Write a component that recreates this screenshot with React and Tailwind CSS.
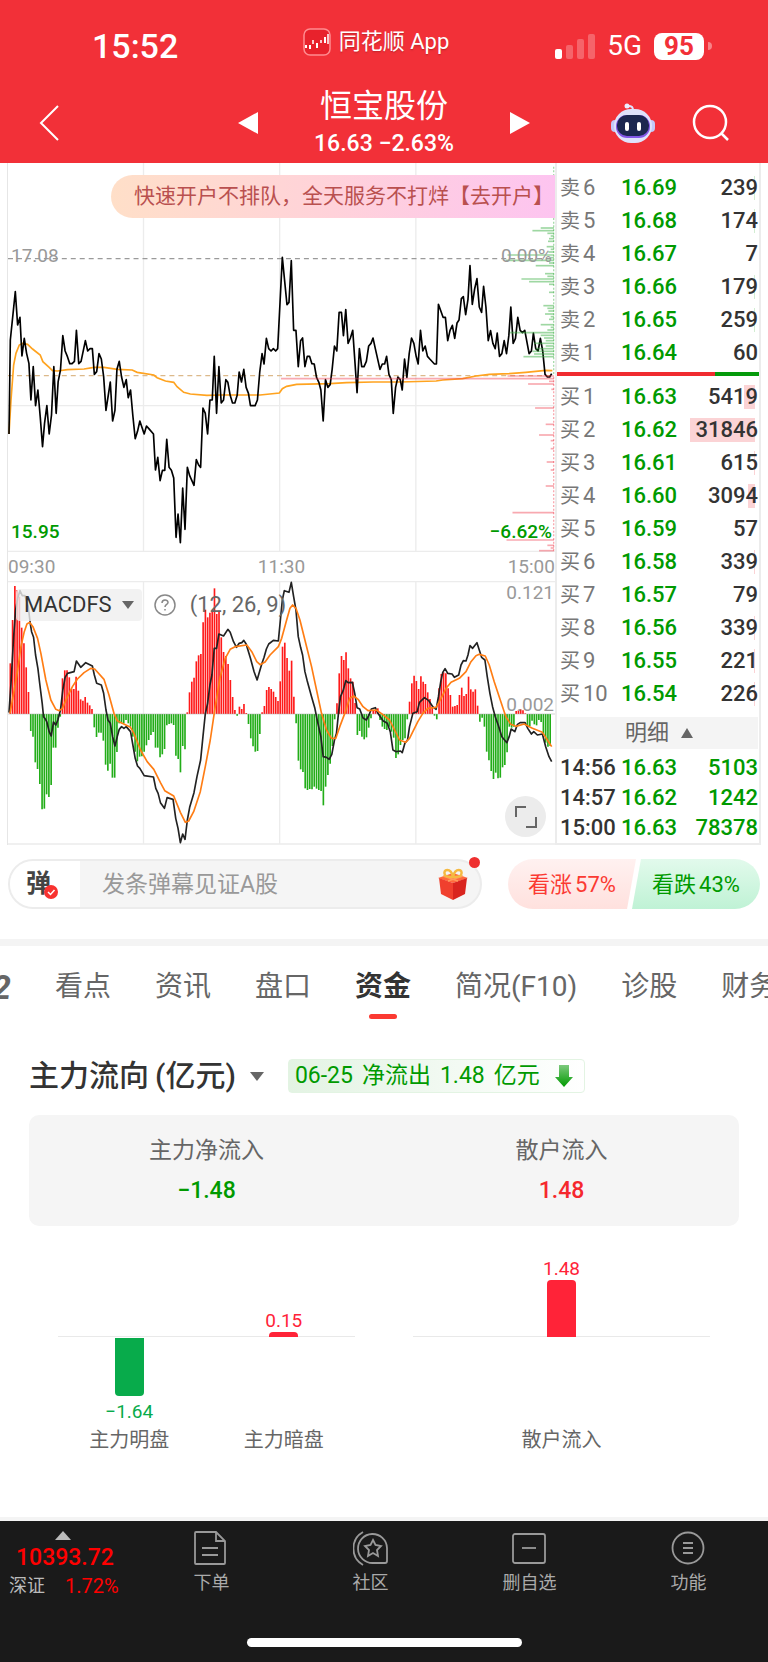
const sells = [
  ["6", "16.69", "239", 1],
  ["5", "16.68", "174", 1],
  ["4", "16.67", "7", 0],
  ["3", "16.66", "179", 1],
  ["2", "16.65", "259", 1],
  ["1", "16.64", "60", 0],
];

const buys = [
  ["1", "16.63", "5419", 11],
  ["2", "16.62", "31846", 65],
  ["3", "16.61", "615", 1],
  ["4", "16.60", "3094", 7],
  ["5", "16.59", "57", 0],
  ["6", "16.58", "339", 1],
  ["7", "16.57", "79", 0],
  ["8", "16.56", "339", 1],
  ["9", "16.55", "221", 1],
  ["10", "16.54", "226", 1],
];

const trades = [
  ["14:56", "16.63", "5103"],
  ["14:57", "16.62", "1242"],
  ["15:00", "16.63", "78378"],
];

const tabs = ["看点", "资讯", "盘口", "资金", "简况(F10)", "诊股", "财务"];

// chart coordinates are three units per pixel
const pricePoints =
  "24,822 28,540 43,395 50,495 57,472 63,588 70,535 77,580 84,610 90,720 97,620 104,737 111,690 118,770 125,860 131,790 138,737 145,822 152,765 159,620 166,760 172,665 179,630 186,527 193,573 200,590 207,611 214,611 221,604 227,511 234,611 241,604 254,542 261,573 268,566 275,566 281,643 288,635 295,581 302,597 309,650 316,751 329,666 336,783 343,751 349,628 356,604 363,651 370,682 377,659 383,713 390,690 397,768 404,836 411,814 418,783 431,822 438,798 445,806 459,822 465,930 472,892 479,962 486,931 493,931 499,838 506,922 513,931 520,954 527,1132 533,1062 540,1148 547,984 554,1108 561,922 568,947 581,976 588,899 595,915 601,922 608,744 615,760 622,822 629,720 636,720 642,589 649,760 656,620 663,729 670,720 677,659 683,667 690,706 697,729 704,729 711,706 717,636 724,666 731,628 738,682 745,700 751,737 765,737 772,720 779,636 786,581 792,612 799,535 806,566 813,573 820,566 827,573 833,566 847,292 861,434 867,427 874,302 881,511 888,511 895,620 902,542 908,534 915,620 922,589 929,589 936,611 943,612 950,652 957,667 963,690 970,783 977,659 984,682 991,674 997,628 1004,558 1011,573 1018,457 1025,457 1031,527 1038,449 1045,550 1052,534 1059,511 1072,698 1079,566 1086,620 1093,620 1100,604 1107,558 1114,550 1120,534 1127,566 1141,628 1148,612 1155,612 1161,589 1168,643 1175,659 1181,760 1188,682 1195,651 1202,659 1208,690 1215,597 1222,652 1229,581 1236,534 1243,550 1250,589 1256,612 1263,511 1270,573 1277,558 1284,589 1291,597 1305,612 1311,612 1317,433 1331,472 1338,472 1345,542 1352,511 1359,496 1366,535 1373,489 1379,480 1386,416 1392,410 1399,464 1406,418 1412,317 1419,433 1426,387 1433,356 1440,441 1447,457 1453,379 1460,441 1467,542 1474,512 1481,550 1488,566 1494,519 1501,589 1508,581 1515,542 1522,581 1529,527 1535,441 1542,550 1549,535 1556,472 1563,511 1570,518 1577,511 1590,581 1597,573 1603,519 1610,566 1617,573 1624,535 1631,573 1638,643 1645,651 1652,651 1658,641";

const averagePoints =
  "24,822 30,720 38,615 45,580 55,555 65,550 80,553 95,567 118,585 126,605 145,622 155,632 170,633 200,629 250,627 280,622 310,622 350,628 395,630 410,637 460,645 470,653 495,663 520,667 530,680 550,697 570,702 620,706 660,705 780,705 838,699 847,686 860,679 890,673 990,671 1040,668 1120,666 1200,666 1310,663 1330,660 1390,656 1430,648 1470,643 1530,641 1580,637 1640,631 1660,632";

const difPoints =
  "24,458 30,370 38,230 44,150 50,115 57,92 64,107 72,107 82,140 88,190 92,215 98,232 104,285 111,325 117,375 124,430 128,470 134,478 138,486 145,515 151,528 158,486 165,495 171,480 179,450 186,390 193,352 200,340 220,335 227,303 240,322 255,308 275,318 281,345 288,370 302,375 309,400 316,450 322,480 329,490 336,530 343,558 350,530 356,508 363,500 370,505 377,500 390,515 397,555 404,595 411,618 418,625 431,647 459,651 466,685 473,700 480,728 492,745 500,713 518,718 526,775 533,805 540,848 547,822 554,838 561,780 568,742 581,698 590,650 601,600 608,530 615,462 622,430 629,375 635,345 642,265 649,265 656,222 670,228 683,208 690,217 700,245 709,262 717,250 725,248 731,241 738,252 751,295 762,335 771,360 785,312 792,292 799,267 806,252 820,241 835,243 847,120 853,92 867,97 874,67 881,110 888,150 895,230 902,262 908,285 915,335 922,363 935,410 945,445 952,480 963,530 970,590 980,592 988,598 996,583 1004,540 1010,520 1016,460 1022,410 1030,392 1038,362 1045,368 1058,367 1065,400 1072,443 1080,447 1090,474 1100,480 1108,465 1115,447 1127,443 1135,460 1150,482 1163,490 1172,515 1180,570 1190,575 1203,573 1208,578 1216,550 1224,540 1230,500 1240,460 1253,455 1260,427 1275,413 1288,422 1300,440 1310,448 1317,410 1324,365 1330,337 1337,326 1345,340 1358,342 1365,352 1378,345 1385,315 1392,302 1400,303 1406,285 1412,257 1420,265 1433,248 1440,270 1447,292 1457,300 1464,350 1472,400 1480,440 1488,470 1497,495 1508,530 1523,548 1530,530 1536,507 1547,515 1555,493 1563,488 1578,488 1586,505 1597,522 1604,515 1615,525 1630,522 1640,560 1650,590 1658,605";

const deaPoints =
  "27,460 38,400 50,330 60,260 70,215 78,192 86,187 96,200 110,235 120,280 135,360 150,420 165,448 175,452 185,445 200,410 215,380 230,357 250,338 270,325 282,327 310,358 325,405 340,460 350,482 365,490 390,502 400,520 420,570 440,605 460,628 480,668 493,692 520,708 540,757 555,787 565,783 580,755 600,695 615,620 630,540 645,440 660,350 675,295 690,268 705,260 740,255 755,275 770,305 780,314 795,306 810,285 835,260 845,235 860,180 870,145 878,135 888,145 900,180 915,240 935,320 950,390 965,460 980,510 995,535 1008,535 1020,500 1035,460 1050,415 1062,408 1075,418 1090,440 1105,452 1130,450 1150,464 1170,480 1185,510 1200,540 1218,547 1230,535 1240,515 1255,485 1270,460 1285,445 1310,442 1325,415 1340,385 1355,367 1380,355 1400,335 1415,305 1430,287 1440,283 1458,288 1470,315 1485,365 1505,425 1520,470 1535,493 1550,499 1575,492 1600,505 1630,517 1645,540 1658,560";

// end of each MACD bar, one per minute, measured against ZERO
const ZERO = 462;
const macdBars = [
  310, 180, 78, 90, 110, 203, 250, 322, 396, 513, 530, 607, 627, 672, 748, 746,
  703, 711, 675, 563, 563, 503, 470, 355, 331, 331, 352, 387, 387, 350, 392,
  418, 422, 411, 428, 436, 447, 502, 531, 518, 518, 542, 614, 632, 611, 653,
  653, 576, 490, 490, 490, 480, 490, 500, 530, 575, 604, 590, 589, 575, 556,
  540, 525, 516, 563, 563, 592, 583, 567, 496, 492, 490, 495, 587, 597, 637,
  558, 568, 457, 397, 365, 353, 304, 286, 282, 187, 149, 172, 158, 153, 85,
  162, 152, 232, 276, 288, 312, 360, 411, 450, 467, 440, 447, 432, 459, 492,
  535, 559, 575, 573, 522, 457, 438, 390, 381, 387, 395, 411, 423, 364, 260,
  248, 294, 332, 302, 410, 490, 602, 628, 636, 685, 690, 687, 688, 680, 686,
  690, 693, 736, 680, 645, 611, 558, 478, 430, 340, 288, 300, 277, 325, 355,
  365, 429, 525, 513, 530, 538, 532, 503, 475, 452, 450, 445, 480, 500, 507,
  510, 500, 515, 533, 594, 583, 555, 540, 535, 478, 425, 370, 347, 363, 387,
  349, 365, 372, 397, 417, 442, 467, 478, 385, 342, 337, 340, 385, 405, 440,
  438, 435, 405, 383, 408, 402, 350, 388, 395, 388, 437, 485, 473, 500, 575,
  601, 633, 657, 638, 655, 653, 622, 615, 577, 500, 503, 500, 453, 451, 448,
  451, 460, 500, 498, 482, 493, 496, 480, 486, 525, 548, 560, 558,
];

const greenDepth = [
  [204, 815], [212, 790], [220, 835], [228, 845], [236, 840], [244, 837],
  [260, 833], [268, 845], [276, 838], [285, 715], [293, 845], [301, 710],
  [309, 840], [317, 800], [341, 828], [349, 835], [357, 757], [365, 780],
  [373, 840], [397, 840], [437, 823], [445, 835], [453, 838], [462, 828],
  [470, 845], [478, 840], [494, 815], [502, 845], [510, 835], [518, 722],
  [526, 815], [534, 825], [542, 830], [550, 795], [558, 830], [566, 800],
  [574, 790], [582, 795], [590, 763],
];

const redDepth = [
  [648, 715], [656, 33], [664, 840], [672, 777], [688, 847], [744, 798],
  [793, 830], [825, 810], [842, 845], [866, 845], [906, 833], [930, 845],
  [978, 830], [1058, 730], [1140, 712], [1156, 835], [1164, 845], [1172, 810],
];

const StatusBar = () => (
  <div className="grid grid-cols-3 items-center pl-10 pr-14 pt-5 h-16 leading-none">
    <span className="pl-13 pt-2 text-[34px] font-medium">15:52</span>
    <div className="flex items-center justify-center gap-2">
      <svg viewBox="0 0 28 28" className="size-7">
        <rect x="1" y="1" width="26" height="26" rx="6" fill="#e8222c" stroke="#ff8c90" strokeWidth="1.5" />
        <path d="M3 17v3M7 17v4M14 15v5M22 9v6" stroke="#fff" strokeWidth="2" />
        <path d="M10 12v4M18 12v3M25 6v10" stroke="#fff" strokeWidth="1.5" />
      </svg>
      <span className="text-[22px] text-shadow-sm">同花顺 App</span>
    </div>
    <div className="flex items-center justify-end gap-3 pt-2">
      <svg viewBox="0 0 40 26" className="w-10 h-[26px]" fill="#fff">
        <rect x="0" y="16" width="7" height="10" rx="2" />
        <g opacity=".25">
          <rect x="11" y="12" width="7" height="14" rx="2" />
          <rect x="22" y="6" width="7" height="20" rx="2" />
          <rect x="33" y="1" width="7" height="25" rx="2" />
        </g>
      </svg>
      <span className="text-[28px]">5G</span>
      <div className="flex items-center gap-1">
        <span className="flex items-center justify-center w-[50px] h-[27px] rounded-lg bg-white text-[26px] font-bold text-[#f23038]">
          95
        </span>
        <span className="w-1 h-2 rounded-r-full bg-white/40" />
      </div>
    </div>
  </div>
);

const Robot = () => (
  <svg viewBox="0 0 44 40" className="w-11 h-10">
    <path d="M22 8c0-4-1-5-5-5" fill="none" stroke="#dfe3ff" strokeWidth="2" />
    <circle cx="16" cy="3" r="2.5" fill="#eceeff" />
    <rect x="0" y="17" width="8" height="12" rx="4" fill="#c3c9f7" />
    <rect x="36" y="17" width="8" height="12" rx="4" fill="#c3c9f7" />
    <rect x="3" y="6" width="38" height="34" rx="17" fill="#dfe2fb" />
    <rect x="5" y="12" width="34" height="23" rx="11" fill="#8458e6" />
    <rect x="6" y="12" width="32" height="21" rx="10" fill="#1c2750" />
    <rect x="14" y="19" width="4" height="9" rx="2" fill="#fff" />
    <rect x="26" y="19" width="4" height="9" rx="2" fill="#fff" />
  </svg>
);

const Header = () => (
  <header className="bg-[#f23038] text-white h-[163px]">
    <StatusBar />
    <div className="grid grid-cols-[1fr_292px_1fr] items-center h-[99px] px-[39px] pt-3 pb-3">
      <button aria-label="返回" className="w-5">
        <svg viewBox="0 0 20 36" className="w-5 h-9 mt-[10px]" fill="none" stroke="#fff" strokeWidth="2">
          <path d="M19 1 2 18l17 17" />
        </svg>
      </button>
      <div className="flex items-center justify-between">
        <button aria-label="上一只">
          <svg viewBox="0 0 20 22" className="w-5 h-[22px] mt-[10px]" fill="#fff">
            <path d="M20 0v22L0 11z" />
          </svg>
        </button>
        <div className="flex flex-col items-center pt-2">
          <h1 className="text-[32px] leading-11">恒宝股份</h1>
          <p className="text-[23px] leading-8 font-medium">16.63 −2.63%</p>
        </div>
        <button aria-label="下一只">
          <svg viewBox="0 0 20 22" className="w-5 h-[22px] mt-[10px]" fill="#fff">
            <path d="M0 0v22l20-11z" />
          </svg>
        </button>
      </div>
      <div className="flex items-center justify-end gap-9 pt-[10px]">
        <button aria-label="智能助手">
          <Robot />
        </button>
        <button aria-label="搜索">
          <svg viewBox="0 0 38 38" className="size-[38px]" fill="none" stroke="#fff" strokeWidth="2.5">
            <circle cx="19" cy="18" r="16" />
            <path d="m30 29 7 7" />
          </svg>
        </button>
      </div>
    </div>
  </header>
);

const PriceChart = () => (
  <div className="relative h-[389px]">
    <svg
      viewBox="21 9 1647 1167"
      preserveAspectRatio="none"
      className="absolute inset-0 size-full"
      fill="none"
    >
      <path d="M429 9v1165M839 9v1165M1249 9v1165M21 737h1647M21 1174h1647" stroke="#ececec" strokeWidth="4" />
      <path d="M21 296h1647" stroke="#9a9a9a" strokeWidth="4" strokeDasharray="15 12" />
      <path d="M21 647h1647" stroke="#dcb98a" strokeWidth="4" strokeDasharray="15 12" />
      <polyline points={averagePoints} stroke="#ffa31f" strokeWidth="5" />
      <polyline points={pricePoints} stroke="#000" strokeWidth="5" strokeLinejoin="round" />
      {greenDepth.map(([y, x]) => (
        <path key={y} d={`M${x + 810} ${y}H1665`} stroke="#3db046" strokeOpacity=".5" strokeWidth="5" />
      ))}
      {redDepth.map(([y, x]) => (
        <path key={y} d={`M${x + 810} ${y}H1665`} stroke="#f04050" strokeOpacity=".45" strokeWidth="5" />
      ))}
      <path d="M1664 20v625" stroke="#3db046" strokeOpacity=".45" strokeWidth="4" strokeDasharray="6 5" />
      <path d="M1664 650v522" stroke="#f04050" strokeOpacity=".45" strokeWidth="4" strokeDasharray="6 5" />
    </svg>
    <a
      href="#open"
      className="absolute top-3 right-0 left-[103px] h-[43px] pl-[23px] rounded-l-full rounded-r-2xl overflow-hidden whitespace-nowrap text-[21px] leading-[43px] text-[#b9504f] bg-linear-to-r from-[#ffdfc8] via-[#ffd2da] to-[#fdc4f0]"
    >
      快速开户不排队，全天服务不打烊【去开户】
    </a>
    <span className="absolute top-[83px] left-[3px] text-[#999]">17.08</span>
    <span className="absolute top-[83px] right-[3px] text-[#999]">0.00%</span>
    <span className="absolute bottom-[10px] left-[3px] font-medium text-[#009a00]">15.95</span>
    <span className="absolute bottom-[10px] right-[3px] font-medium text-[#009a00]">−6.62%</span>
  </div>
);

const MacdChart = () => (
  <div className="relative h-[264px]">
    <svg
      viewBox="21 63 1647 792"
      preserveAspectRatio="none"
      className="absolute inset-0 size-full"
      fill="none"
    >
      <path d="M429 63v790M839 63v790M1249 63v790M21 65h1647M21 852h1647" stroke="#ececec" strokeWidth="4" />
      {macdBars.map((end, i) => (
        <path
          key={i}
          d={`M${28 + i * 6.83} ${ZERO}V${end}`}
          stroke={end < ZERO ? "#ff1a1a" : "#22ad18"}
          strokeWidth="5"
        />
      ))}
      <path d="M21 462h1647" stroke="#aaa" strokeOpacity=".5" strokeWidth="3" />
      <polyline points={difPoints} stroke="#222" strokeWidth="5" strokeLinejoin="round" />
      <polyline points={deaPoints} stroke="#ff7d14" strokeWidth="5" strokeLinejoin="round" />
    </svg>
    <div className="absolute top-2 left-2 flex items-center text-[22px] text-[#666]">
      <button className="flex items-center gap-[10px] h-8 px-2 rounded bg-[#efefef]/80 text-[#333]">
        MACDFS
        <svg viewBox="0 0 12 8" className="w-3 h-2" fill="#666">
          <path d="M0 0h12L6 8z" />
        </svg>
      </button>
      <button aria-label="指标说明" className="ml-3">
        <svg viewBox="0 0 22 22" className="size-[22px]" fill="none" stroke="#888" strokeWidth="1.5">
          <circle cx="11" cy="11" r="10" />
          <path d="M8 9c0-4 6-4 6-.5 0 2-3 2-3 4.5M11 15v1.5" />
        </svg>
      </button>
      <span className="ml-[14px]">(12, 26, 9)</span>
    </div>
    <span className="absolute top-0 right-px leading-6 text-[#999]">0.121</span>
    <span className="absolute top-28 right-px leading-6 text-[#999]">0.002</span>
    <button
      aria-label="全屏"
      className="absolute bottom-2 right-[9px] flex items-center justify-center size-[41px] rounded-full bg-[#ececec]"
    >
      <svg viewBox="0 0 22 22" className="size-[22px]" fill="none" stroke="#666" strokeWidth="2">
        <path d="M1 11V1h10M21 11v10H11" />
      </svg>
    </button>
  </div>
);

const BookRows = ({ side, rows }) => (
  <table className="w-full table-fixed">
    <tbody>
      {rows.map(([level, price, volume, bar]) => (
        <tr key={level} className="h-[33px]">
          <th scope="row" className="w-[61px] p-0 text-left font-normal text-[20px] text-[#777]">
            {side}
            <span className="ml-[3px] text-[22px]">{level}</span>
          </th>
          <td className="w-[60px] p-0 text-[#009a00]">{price}</td>
          <td className="p-0 text-right text-[#333]">
            <span className="relative flex items-center justify-end h-6">
              <span
                className={side === "买" ? "absolute right-[3px] h-full bg-[#fbd3d5]" : "absolute right-[3px] h-full bg-[#d2edd2]"}
                style={{ width: bar }}
              />
              <span className="relative">{volume}</span>
            </span>
          </td>
        </tr>
      ))}
    </tbody>
  </table>
);

const OrderBook = () => (
  <aside className="w-[206px] border-x-2 border-b-2 border-[#ececec] pt-2 text-[22px] leading-6 font-medium">
    <div className="pl-[3px] pr-px">
      <BookRows side="卖" rows={sells} />
    </div>
    <div className="flex h-1 mt-[3px] mb-1">
      <div className="flex-1 bg-[#f02b30]" />
      <div className="w-[44px] bg-[#059a0b]" />
    </div>
    <div className="pl-[3px] pr-px">
      <BookRows side="买" rows={buys} />
      <button className="flex items-center justify-center gap-3 w-full h-8 mt-[7px] mb-1 bg-[#f4f4f4] font-normal text-[#666]">
        明细
        <svg viewBox="0 0 12 10" className="w-3 h-[10px]" fill="#666">
          <path d="M0 10h12L6 0z" />
        </svg>
      </button>
      <table className="w-full table-fixed">
        <tbody>
          {trades.map(([time, price, volume]) => (
            <tr key={time} className="h-[30px]">
              <td className="w-[61px] p-0 text-[#333]">{time}</td>
              <td className="w-[60px] p-0 text-[#009a00]">{price}</td>
              <td className="p-0 text-right text-[#009a00]">{volume}</td>
            </tr>
          ))}
        </tbody>
      </table>
    </div>
  </aside>
);

const Gift = () => (
  <svg viewBox="0 0 30 32" className="w-[30px] h-8 shrink-0">
    <path d="m0 10 15-5 15 5-15 5z" fill="#ff6a3c" />
    <path d="M1 10l14 5v17L3 26z" fill="#f0402e" />
    <path d="M29 10l-14 5v17l12-6z" fill="#d9251f" />
    <path d="m5 8 15 5M25 8l-15 5" stroke="#ff9a5c" strokeWidth="1.5" />
    <path d="M15 9C13-1 4 1 7 7c1 2 5 2 8 2zM15 9c2-10 11-8 8-2-1 2-5 2-8 2z" fill="none" stroke="#f5b942" strokeWidth="2.5" />
  </svg>
);

const CommentBar = () => (
  <div className="flex items-center gap-[26px] pl-2 pr-2 pt-[14px] pb-[30px]">
    <div className="relative flex items-center flex-1 h-[50px] rounded-full border-2 border-[#ececec] bg-[#f5f5f5]">
      <button className="relative flex items-center h-full w-[70px] pl-4 rounded-l-full bg-white text-[25px] font-bold text-[#444]">
        弹
        <svg viewBox="0 0 14 14" className="absolute bottom-2 left-[34px] size-[14px]">
          <circle cx="7" cy="7" r="7" fill="#f8322f" />
          <path d="m4 7 2.5 2.5L10.500 5" fill="none" stroke="#fff" strokeWidth="1.5" />
        </svg>
      </button>
      <input
        aria-label="发条弹幕"
        placeholder="发条弹幕见证A股"
        className="flex-1 min-w-0 h-full pl-[22px] bg-transparent text-[23px] outline-none placeholder:text-[#999]"
      />
      <button aria-label="礼物" className="mr-3">
        <Gift />
      </button>
      <span className="absolute -top-1 right-0 size-[11px] rounded-full bg-[#ee2f2f]" />
    </div>
    <div className="flex w-[252px] h-[50px] text-[22px]">
      <button className="flex-1 rounded-l-full bg-linear-to-b from-[#fff1f0] to-[#ffe1de] text-[#fb3a32] [clip-path:polygon(0_0,100%_0,93%_100%,0_100%)]">
        看涨<span className="ml-[3px]">57%</span>
      </button>
      <button className="flex-1 -ml-1 rounded-r-full bg-linear-to-b from-[#e2faec] to-[#bff2d5] text-[#009a00] [clip-path:polygon(7%_0,100%_0,100%_100%,0_100%)]">
        看跌<span className="ml-[3px]">43%</span>
      </button>
    </div>
  </div>
);

const Tabs = () => (
  <nav className="flex items-start gap-11 h-[88px] pt-[21px] overflow-hidden whitespace-nowrap text-[28px] leading-10 text-[#666]">
    <a href="#l2" className="-ml-2 text-[34px] font-bold italic">
      2
    </a>
    {tabs.map((tab) => (
      <a
        key={tab}
        href={`#${tab}`}
        className={tab === "资金" ? "flex flex-col items-center font-bold text-[#333]" : "block"}
      >
        {tab}
        {tab === "资金" && <span className="w-7 h-[5px] mt-[7px] rounded-full bg-[#fb3a32]" />}
      </a>
    ))}
  </nav>
);

const FlowBar = ({ label, value, height, negative }) => (
  <div className="flex flex-col items-center text-[19px] leading-5">
    <div className="flex flex-col items-center justify-end gap-px h-[92px]">
      {!negative && (
        <>
          <span className="text-[#ff2338]">{value}</span>
          <div className="w-[29px] rounded-t bg-[#ff2338]" style={{ height }} />
        </>
      )}
    </div>
    <div className="flex flex-col items-center w-full gap-[6px] h-[93px] pt-px">
      {negative && (
        <>
          <div className="w-[29px] rounded-b bg-[#08ab4b]" style={{ height }} />
          <span className="text-[#08ab4b]">{value}</span>
        </>
      )}
    </div>
    <span className="text-[20px] text-[#666]">{label}</span>
  </div>
);

const MoneyFlow = () => (
  <section className="px-[29px] pt-[22px] pb-[67px]">
    <div className="flex items-center">
      <button className="flex items-center text-[30px] leading-10 font-medium text-[#333]">
        主力流向<span className="ml-[6px]">(亿元)</span>
        <svg viewBox="0 0 14 9" className="w-[14px] h-[9px] ml-[14px]" fill="#666">
          <path d="M0 0h14L7 9z" />
        </svg>
      </button>
      <div className="flex items-center gap-[9px] h-[34px] ml-6 pl-[6px] pr-[11px] rounded border border-[#e3f4e3] bg-linear-to-r from-[#e3f3e3] to-white text-[23px] text-[#009a00]">
        <span>06-25</span>
        <span>净流出</span>
        <span>1.48</span>
        <span>亿元</span>
        <svg viewBox="0 0 18 22" className="w-[18px] h-[22px] ml-[6px]">
          <defs>
            <linearGradient id="down" x2="0" y2="1">
              <stop stopColor="#7cc97c" />
              <stop offset="1" stopColor="#009a00" />
            </linearGradient>
          </defs>
          <path d="M4 0h10v12h4l-9 10-9-10h4z" fill="url(#down)" />
        </svg>
      </div>
    </div>

    <dl className="grid grid-cols-2 mt-[19px] h-[111px] pt-4 rounded-[10px] bg-[#f5f5f5] text-center">
      <div>
        <dt className="text-[23px] leading-10 text-[#666]">主力净流入</dt>
        <dd className="text-[23px] leading-10 font-medium text-[#009a00]">−1.48</dd>
      </div>
      <div>
        <dt className="text-[23px] leading-10 text-[#666]">散户流入</dt>
        <dd className="text-[23px] leading-10 font-medium text-[#f5282d]">1.48</dd>
      </div>
    </dl>

    <div className="relative grid grid-cols-2 gap-[58px] mt-[19px] px-[29px]">
      <div className="absolute inset-x-[29px] top-[91px] grid grid-cols-2 gap-[58px]">
        <div className="h-px bg-[#e9e9e9]" />
        <div className="h-px bg-[#e9e9e9]" />
      </div>
      <div className="relative grid grid-cols-2 gap-3">
        <FlowBar label="主力明盘" value="−1.64" height={58} negative />
        <FlowBar label="主力暗盘" value="0.15" height={5} />
      </div>
      <div className="relative">
        <FlowBar label="散户流入" value="1.48" height={57} />
      </div>
    </div>
  </section>
);

const icons = {
  下单: (
    <>
      <path d="M2 1h20l9 9v22a1 1 0 0 1-1 1H2a1 1 0 0 1-1-1V2a1 1 0 0 1 1-1zM22 1v9h9" />
      <path d="M8 17h16M8 24h16" />
    </>
  ),
  社区: (
    <>
      <path d="M10 1a19 19 0 0 0 0 33" />
      <path d="M34 17v13a2 2 0 0 1-2 2H20a14.500 14.500 0 1 1 14-15z" />
      <path d="m20 9 2.500 5 5.500 1-4 4 1 6-5-3-5 3 1-6-4-4 5.500-1z" />
    </>
  ),
  删自选: (
    <>
      <rect x="1" y="3" width="32" height="29" rx="2" />
      <path d="M10 17h14" />
    </>
  ),
  功能: (
    <>
      <circle cx="17" cy="17" r="15.500" />
      <path d="M12 12h10M12 17h10M12 22h10" />
    </>
  ),
};

const Footer = () => (
  <footer className="bg-[#1a1a1a] border-t-4 border-[#f4f4f4] pb-[15px]">
    <div className="grid grid-cols-[132px_1fr_1fr_1fr_1fr] h-[117px]">
      <button className="flex flex-col items-start pt-[10px] text-[#f00]">
        <svg viewBox="0 0 16 9" className="w-4 h-[9px] ml-[55px]" fill="#bbb">
          <path d="M0 9h16L8 0z" />
        </svg>
        <span className="ml-4 mt-1 text-[23px] leading-7 font-medium">10393.72</span>
        <span className="flex items-center gap-5 ml-[9px] text-[20px] leading-7">
          <span className="text-[18px] text-[#bbb]">深证</span>
          1.72%
        </span>
      </button>
      {Object.entries(icons).map(([name, icon]) => (
        <button
          key={name}
          className="flex flex-col items-center gap-[5px] pt-[10px] text-[18px] leading-6 text-[#aaa]"
        >
          <svg viewBox="0 0 35 35" className="size-[35px]" fill="none" stroke="#999" strokeWidth="1.8">
            {icon}
          </svg>
          {name}
        </button>
      ))}
    </div>
    <div className="w-[275px] h-[9px] mx-auto rounded-full bg-white" />
  </footer>
);

const App = () => {
  return (
    <div className="min-h-screen overflow-x-hidden bg-white font-[Roboto,'Noto_Sans_CJK_SC',sans-serif]">
      <Header />
      <main>
        <div className="flex pl-[7px] pr-[7px]">
          <div className="flex-1 min-w-0 border-l border-[#e6e6e6] text-[19px] leading-5">
            <PriceChart />
            <div className="flex items-center justify-between h-[29px] text-[#999]">
              <span>09:30</span>
              <span>11:30</span>
              <span>15:00</span>
            </div>
            <MacdChart />
          </div>
          <OrderBook />
        </div>
        <CommentBar />
        <div className="h-[7px] bg-[#f4f4f4]" />
        <Tabs />
        <MoneyFlow />
      </main>
      <Footer />
    </div>
  );
};

export default App;
